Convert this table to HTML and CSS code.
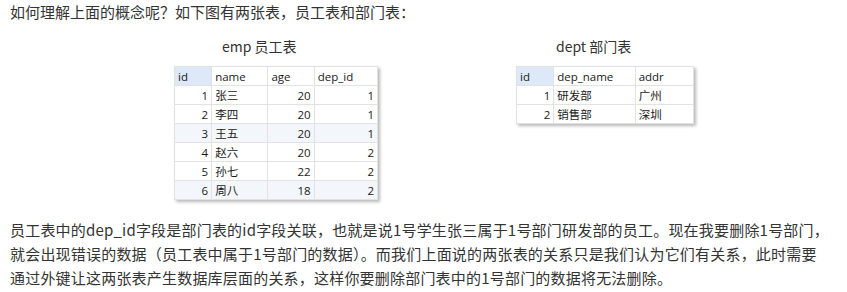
FILE: index.html
```html
<!DOCTYPE html>
<html lang="zh">
<head>
<meta charset="utf-8">
<link rel="stylesheet" href="styles.css">
</head>
<body>
<p class="intro">如何理解上面的概念呢？如下图有两张表，员工表和部门表：</p>
<div class="figs">
  <div class="fig fig-emp">
    <div class="cap cap-emp">emp 员工表</div>
    <table class="grid emp">
      <colgroup><col class="c1"><col class="c2"><col class="c3"><col class="c4"></colgroup>
      <thead><tr><th class="sel">id</th><th>name</th><th>age</th><th>dep_id</th></tr></thead>
      <tbody>
        <tr><td class="n">1</td><td>张三</td><td class="n">20</td><td class="n">1</td></tr>
        <tr><td class="n">2</td><td>李四</td><td class="n">20</td><td class="n">1</td></tr>
        <tr class="alt"><td class="n">3</td><td>王五</td><td class="n">20</td><td class="n">1</td></tr>
        <tr><td class="n">4</td><td>赵六</td><td class="n">20</td><td class="n">2</td></tr>
        <tr><td class="n">5</td><td>孙七</td><td class="n">22</td><td class="n">2</td></tr>
        <tr class="alt"><td class="n">6</td><td>周八</td><td class="n">18</td><td class="n">2</td></tr>
      </tbody>
    </table>
  </div>
  <div class="fig fig-dept">
    <div class="cap cap-dept">dept 部门表</div>
    <table class="grid dept">
      <colgroup><col class="d1"><col class="d2"><col class="d3"></colgroup>
      <thead><tr><th class="sel">id</th><th>dep_name</th><th>addr</th></tr></thead>
      <tbody>
        <tr><td class="n">1</td><td>研发部</td><td>广州</td></tr>
        <tr><td class="n">2</td><td>销售部</td><td>深圳</td></tr>
      </tbody>
    </table>
  </div>
</div>
<p class="para"><span class="ln">员工表中的dep_id字段是部门表的id字段关联，也就是说1号学生张三属于1号部门研发部的员工。现在我要删除1号部门，</span><span class="ln">就会出现错误的数据（员工表中属于1号部门的数据）。而我们上面说的两张表的关系只是我们认为它们有关系，此时需要</span><span class="ln">通过外键让这两张表产生数据库层面的关系，这样你要删除部门表中的1号部门的数据将无法删除。</span></p>
</body>
</html>
```

FILE: styles.css
```css
html, body {
  margin: 0;
  padding: 0;
  background: #fff;
}
body {
  padding: 0 10px;
  font-family: "Noto Sans CJK SC", "Noto Sans", sans-serif;
  color: #333;
}
.intro {
  margin: 0;
  padding-top: 1px;
  font-size: 15px;
  line-height: 22px;
}
.figs {
  display: flex;
  margin-top: 13px;
}
.fig-emp {
  margin-left: 164px;
  width: 204px;
}
.fig-dept {
  margin-left: 138px;
  width: 178px;
}
.cap {
  font-size: 14px;
  line-height: 20px;
  color: #333;
  height: 21px;
  margin-bottom: 9px;
}
.cap-emp { padding-left: 48px; }
.cap-dept { padding-left: 40px; }
.grid {
  border-collapse: collapse;
  table-layout: fixed;
  width: 100%;
  font-family: "Open Sans", "Noto Sans CJK SC", sans-serif;
  font-size: 11.5px;
  color: #1a1a1a;
  box-shadow: 2px 2px 3px rgba(0,0,0,0.28);
  background: #fff;
}
.dept { margin-top: 1px; }
.grid th, .grid td {
  height: 18px;
  padding: 0 3px;
  border: 1px solid #e2e2e2;
  font-weight: normal;
  text-align: left;
  white-space: nowrap;
  overflow: hidden;
  line-height: 17px;
}
.grid th.sel { background: #dde9f8; }
.grid td.n { text-align: right; }
.grid tr.alt td { background: #f3f6fb; }
.c1 { width: 37px; }
.c2 { width: 56px; }
.c3 { width: 46px; }
.c4 { width: 63px; }
.d1 { width: 37px; }
.d2 { width: 81px; }
.d3 { width: 58px; }
.para {
  margin: 18px 0 0;
  font-size: 15px;
  line-height: 24px;
  letter-spacing: 0.2px;
}
.ln {
  display: block;
  white-space: nowrap;
}
```
